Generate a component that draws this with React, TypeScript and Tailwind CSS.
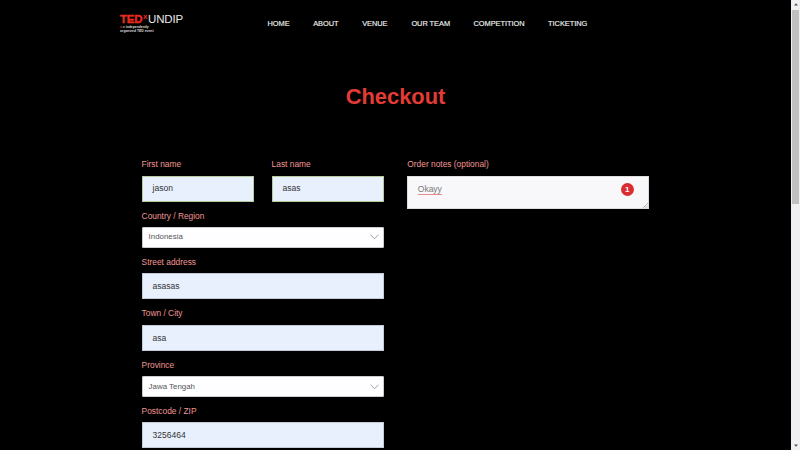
import React from "react";

const navItems = [
  { label: "HOME", width: "w-[45.7px]" },
  { label: "ABOUT", width: "w-[49px]" },
  { label: "VENUE", width: "w-[49.2px]" },
  { label: "OUR TEAM", width: "w-[62.2px]" },
  { label: "COMPETITION", width: "w-[74.5px]" },
  { label: "TICKETING", width: "w-[42px]" },
];

function Label({ children }: { children: React.ReactNode }) {
  return (
    <div className="h-[25.6px] whitespace-nowrap pt-[3px] text-[8.4px] leading-[23px] text-[#f09794]">
      {children}
    </div>
  );
}

function TextField({ label, value, valid }: { label: string; value: string; valid?: boolean }) {
  return (
    <div className="flex-1">
      <Label>{label}</Label>
      <div
        className={`h-[26px] border bg-[#e8f0fe] pl-[10px] text-[8.5px] text-[#333] ${
          valid ? "border-[#b4cba0] leading-[22px]" : "border-[#c3cad8] leading-[24px]"
        }`}
      >
        {value}
      </div>
    </div>
  );
}

function SelectField({ label, value }: { label: string; value: string }) {
  return (
    <div>
      <Label>{label}</Label>
      <div className="flex h-[20.4px] items-center justify-between rounded-[1px] border border-[#ccc] bg-[#fefdff] pl-[6px] pr-[3.5px] text-[7.9px] text-[#555]">
        <span className="leading-[18px]">{value}</span>
        <svg width="9" height="6" viewBox="0 0 9 6" fill="none" stroke="#999" strokeWidth="0.9">
          <path d="M0.5 0.7 4.5 4.8 8.5 0.7" />
        </svg>
      </div>
    </div>
  );
}

function Logo() {
  return (
    <div className="w-[147.5px] pt-[13px]">
      <div className="flex h-[12px] items-start whitespace-nowrap leading-[13px]">
        <span className="w-[22.5px] text-[11.5px] font-black tracking-[-0.2px] text-[#e62b1e] [-webkit-text-stroke:0.4px_#e62b1e]">
          TED
        </span>
        <span className="w-[5.5px] pl-[0.5px] text-[8px] font-bold leading-[7px] text-[#e62b1e]">x</span>
        <span className="text-[11.5px] tracking-[-0.15px] text-[#e8e8e8]">UNDIP</span>
      </div>
      <div className="whitespace-nowrap text-[3.4px] font-bold leading-[4px] text-[#ddd]">
        <div>
          <span className="text-[#e62b1e]">x</span> = independently
        </div>
        <div>organized TED event</div>
      </div>
    </div>
  );
}

function Scrollbar() {
  return (
    <div className="flex h-full w-[9px] flex-col items-center bg-[#f0eff1]">
      <div className="flex h-[9.5px] items-center">
        <svg width="4" height="3" viewBox="0 0 4 3"><path d="M0 2.6 2 0.3 4 2.6Z" fill="#505050" /></svg>
      </div>
      <div className="h-[194px] w-[7px] bg-[#c1c0c1]" />
      <div className="flex flex-1 items-end pb-[3px]">
        <svg width="4" height="3" viewBox="0 0 4 3"><path d="M0 0.4 2 2.7 4 0.4Z" fill="#505050" /></svg>
      </div>
    </div>
  );
}

export default function App() {
  return (
    <div className="flex h-[450px] w-[800px] overflow-hidden bg-black font-['Liberation_Sans',Arial,sans-serif]">
      <div className="h-full w-[791px] overflow-hidden">
        <header className="flex h-[47px] pl-[120px]">
          <Logo />
          <nav className="flex whitespace-nowrap text-[7.4px] leading-[47px] text-[#f0f0f0] [-webkit-text-stroke:0.15px_#f0f0f0]">
            {navItems.map((item) => (
              <a key={item.label} className={`${item.width} tracking-[-0.03px]`}>{item.label}</a>
            ))}
          </nav>
        </header>
        <h1 className="h-[103px] pt-[34px] text-center text-[21.9px] font-bold leading-[32px] text-[#e33b35]">
          Checkout
        </h1>
        <main className="flex gap-[23.7px] pl-[141.6px]">
          <section className="w-[242px]">
            <div className="flex gap-[18px]">
              <TextField label="First name" value="jason" valid />
              <TextField label="Last name" value="asas" valid />
            </div>
            <SelectField label="Country / Region" value="Indonesia" />
            <TextField label="Street address" value="asasas" />
            <TextField label="Town / City" value="asa" />
            <SelectField label="Province" value="Jawa Tengah" />
            <TextField label="Postcode / ZIP" value="3256464" />
          </section>
          <section className="w-[241.5px]">
            <Label>Order notes (optional)</Label>
            <div className="relative flex h-[33.5px] justify-between border border-[#ddd] bg-[#f8f8fa] pl-[9.5px] pr-[14px] pt-[6.5px]">
              <span className="h-[12px] border-b border-[#e58a90] text-[8.5px] leading-[13px] text-[#777]">Okayy</span>
              <span className="flex h-[13px] w-[13px] items-center justify-center rounded-full bg-[#d92d30] text-[8px] font-bold leading-none text-white">
                1
              </span>
              <svg className="absolute bottom-0 right-0" width="5" height="5" viewBox="0 0 5 5" stroke="#888" strokeWidth="0.6">
                <path d="M0 5 5 0M2.5 5 5 2.5" />
              </svg>
            </div>
          </section>
        </main>
      </div>
      <Scrollbar />
    </div>
  );
}
